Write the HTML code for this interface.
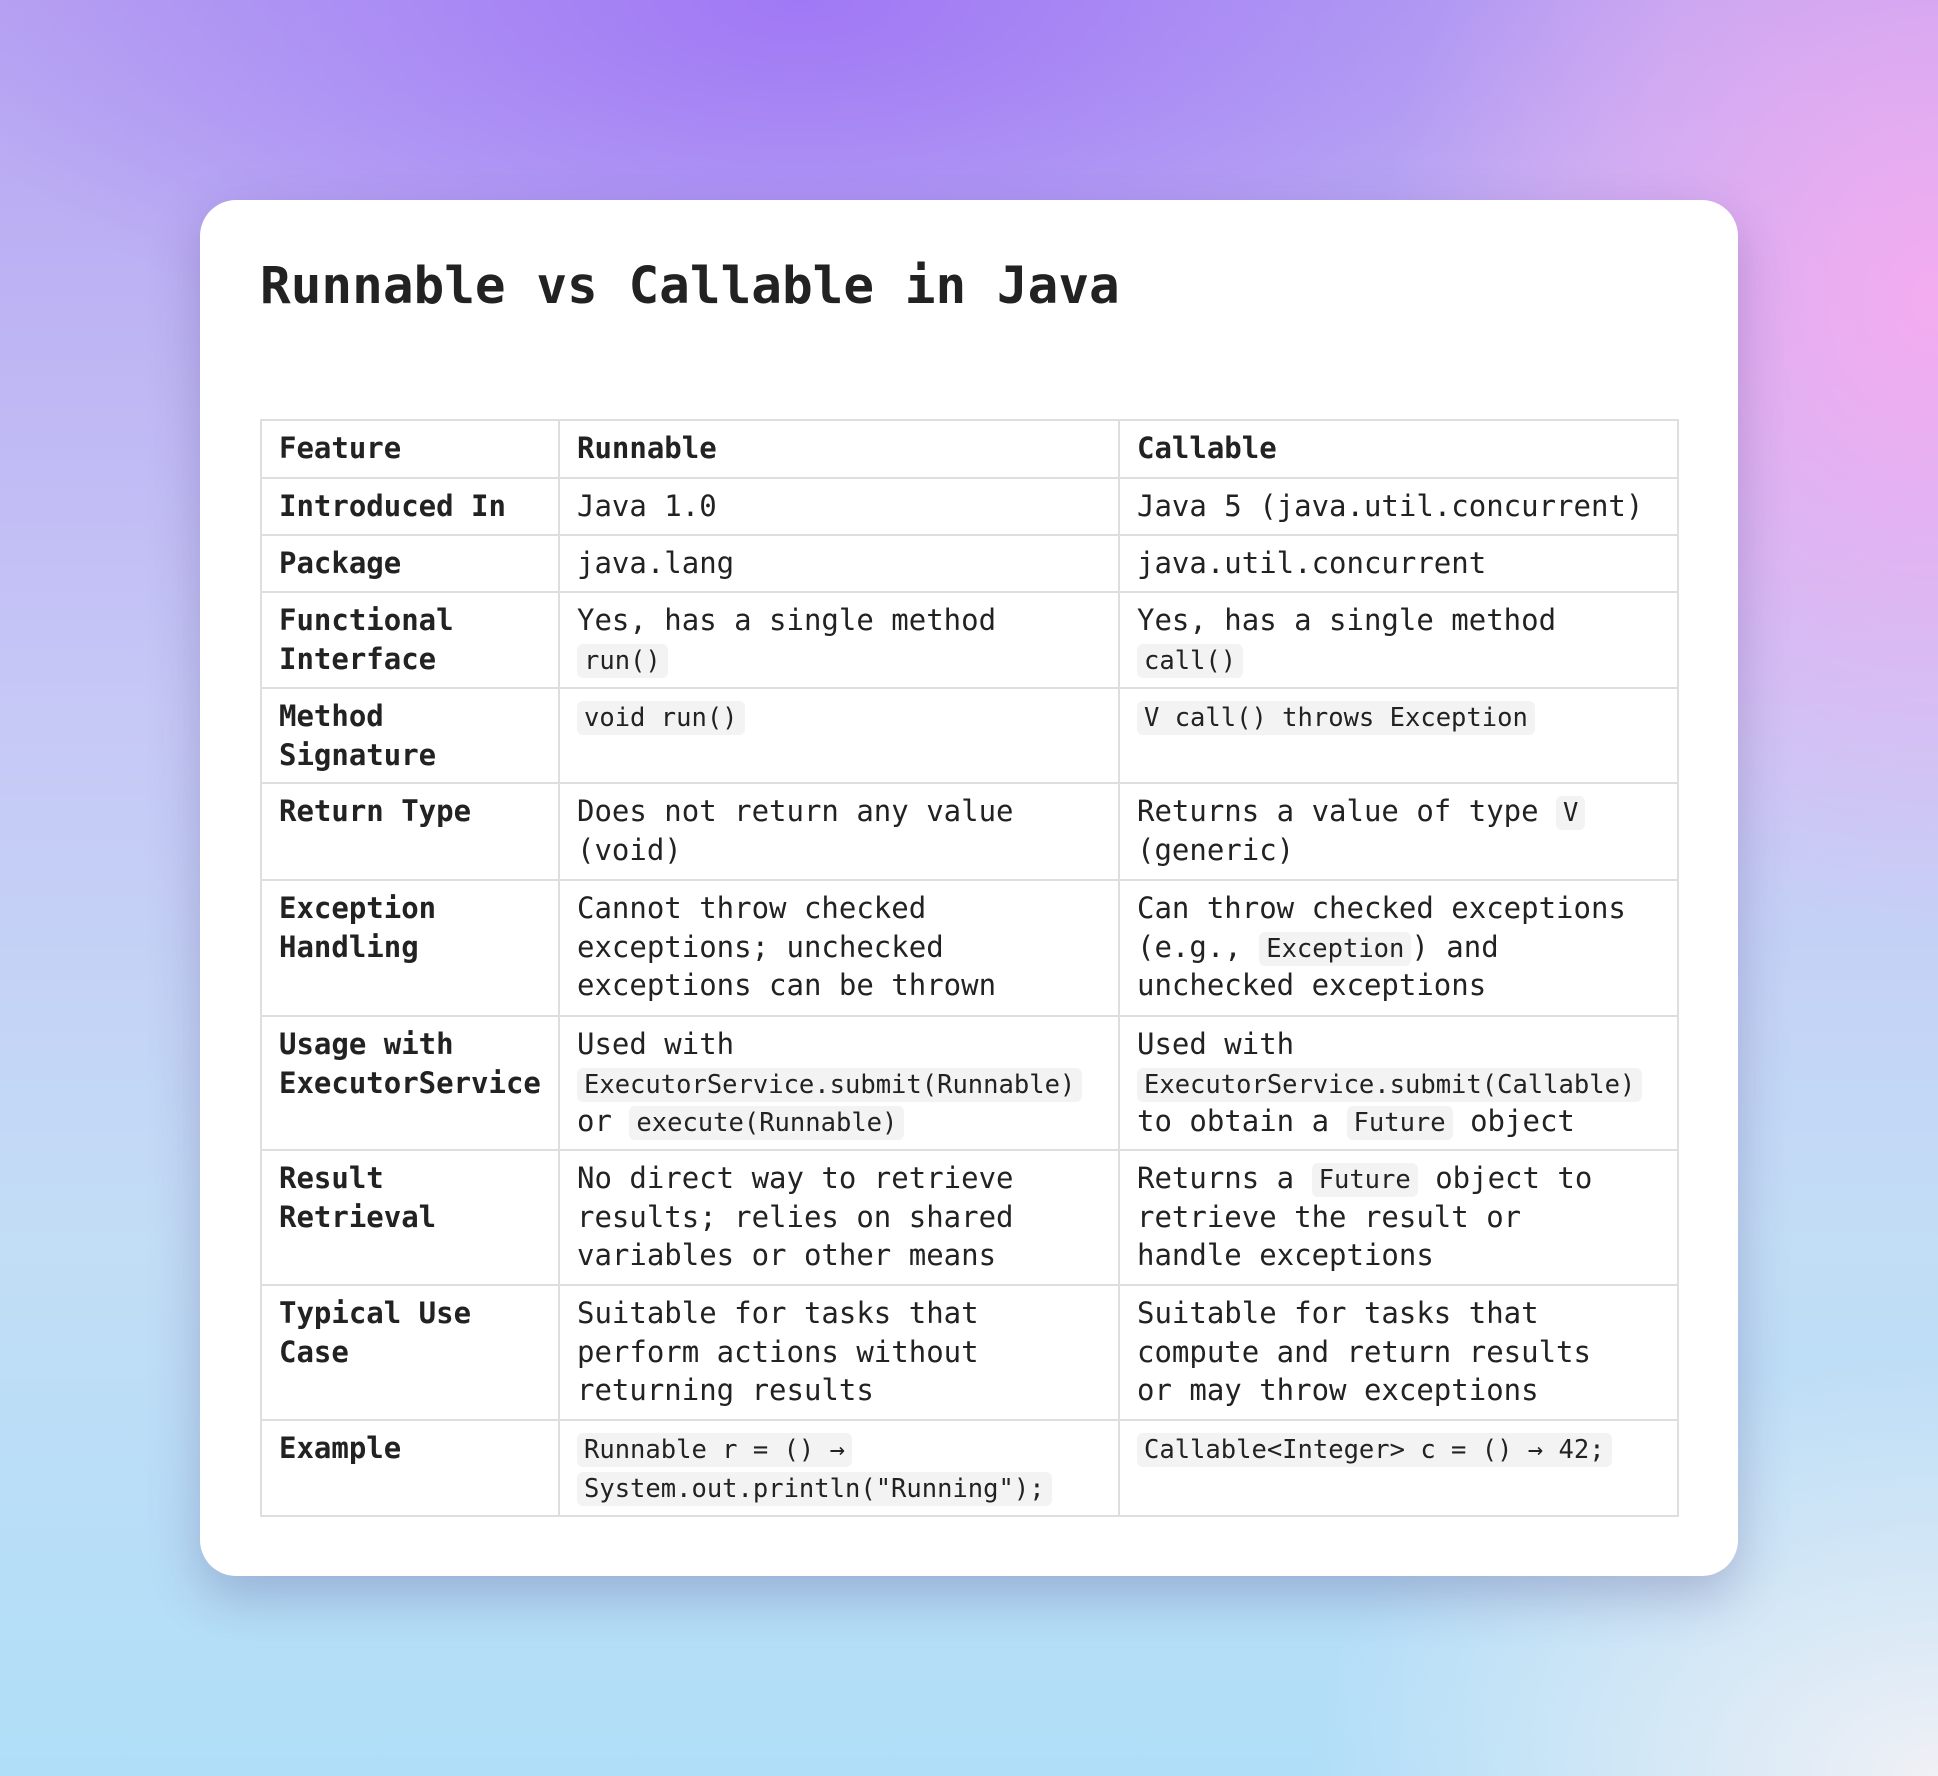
<!DOCTYPE html>
<html><head><meta charset="utf-8"><style>
html,body{margin:0;padding:0}
body{width:1938px;height:1776px;overflow:hidden;position:relative;font-family:"DejaVu Sans Mono","Liberation Mono",monospace;color:#222;
background:
radial-gradient(ellipse 800px 900px at 1938px 300px, rgba(244,172,240,1), rgba(244,172,240,0) 70%),
radial-gradient(ellipse 1100px 500px at 800px 0px, rgba(160,120,245,1), rgba(160,120,245,0) 80%),
radial-gradient(ellipse 900px 600px at 1938px 1776px, rgba(240,240,245,1), rgba(240,240,245,0) 70%),
linear-gradient(180deg,#b7a4f2 0%,#c6c8f6 40%,#c2ddf6 70%,#b0def8 100%);}
.card{position:absolute;left:200px;top:200px;width:1538px;height:1376px;background:#fff;border-radius:36px;box-shadow:0 20px 50px rgba(60,40,110,0.25)}
h1{position:absolute;left:60px;top:54px;margin:0;font-size:51px;font-weight:bold;line-height:66px}
table{position:absolute;left:60px;top:219px;width:1417px;border-collapse:collapse;table-layout:fixed;font-size:29px;line-height:38.5px}
td{border:2px solid #dedede;padding:8px 10px 8px 17px;vertical-align:top}
td:first-child{font-weight:bold}
tr:first-child td{font-weight:bold}
code{font-family:"DejaVu Sans Mono","Liberation Mono",monospace;font-size:25.5px;line-height:24px;background:#f3f3f3;border-radius:6px;padding:2px 7px}
</style></head><body>
<div class="card">
<h1>Runnable vs Callable in Java</h1>
<table>
<colgroup><col style="width:298px"><col style="width:560px"><col style="width:559px"></colgroup>
<tr style="height:58px"><td>Feature</td><td>Runnable</td><td>Callable</td></tr>
<tr style="height:57px"><td>Introduced In</td><td>Java 1.0</td><td>Java 5 (java.util.concurrent)</td></tr>
<tr style="height:57px"><td>Package</td><td>java.lang</td><td>java.util.concurrent</td></tr>
<tr style="height:96px"><td>Functional Interface</td><td>Yes, has a single method<br><code>run()</code></td><td>Yes, has a single method<br><code>call()</code></td></tr>
<tr style="height:95px"><td>Method Signature</td><td><code>void run()</code></td><td><code>V call() throws Exception</code></td></tr>
<tr style="height:97px"><td>Return Type</td><td>Does not return any value<br>(void)</td><td>Returns a value of type <code>V</code><br>(generic)</td></tr>
<tr style="height:136px"><td>Exception Handling</td><td>Cannot throw checked<br>exceptions; unchecked<br>exceptions can be thrown</td><td>Can throw checked exceptions<br>(e.g., <code>Exception</code>) and<br>unchecked exceptions</td></tr>
<tr style="height:134px"><td>Usage with ExecutorService</td><td>Used with<br><code>ExecutorService.submit(Runnable)</code><br>or <code>execute(Runnable)</code></td><td>Used with<br><code>ExecutorService.submit(Callable)</code><br>to obtain a <code>Future</code> object</td></tr>
<tr style="height:135px"><td>Result Retrieval</td><td>No direct way to retrieve<br>results; relies on shared<br>variables or other means</td><td>Returns a <code>Future</code> object to<br>retrieve the result or<br>handle exceptions</td></tr>
<tr style="height:135px"><td>Typical Use Case</td><td>Suitable for tasks that<br>perform actions without<br>returning results</td><td>Suitable for tasks that<br>compute and return results<br>or may throw exceptions</td></tr>
<tr style="height:96px"><td>Example</td><td><code>Runnable r = () →</code><br><code>System.out.println("Running");</code></td><td><code>Callable&lt;Integer&gt; c = () → 42;</code></td></tr>
</table>
</div>
</body></html>
